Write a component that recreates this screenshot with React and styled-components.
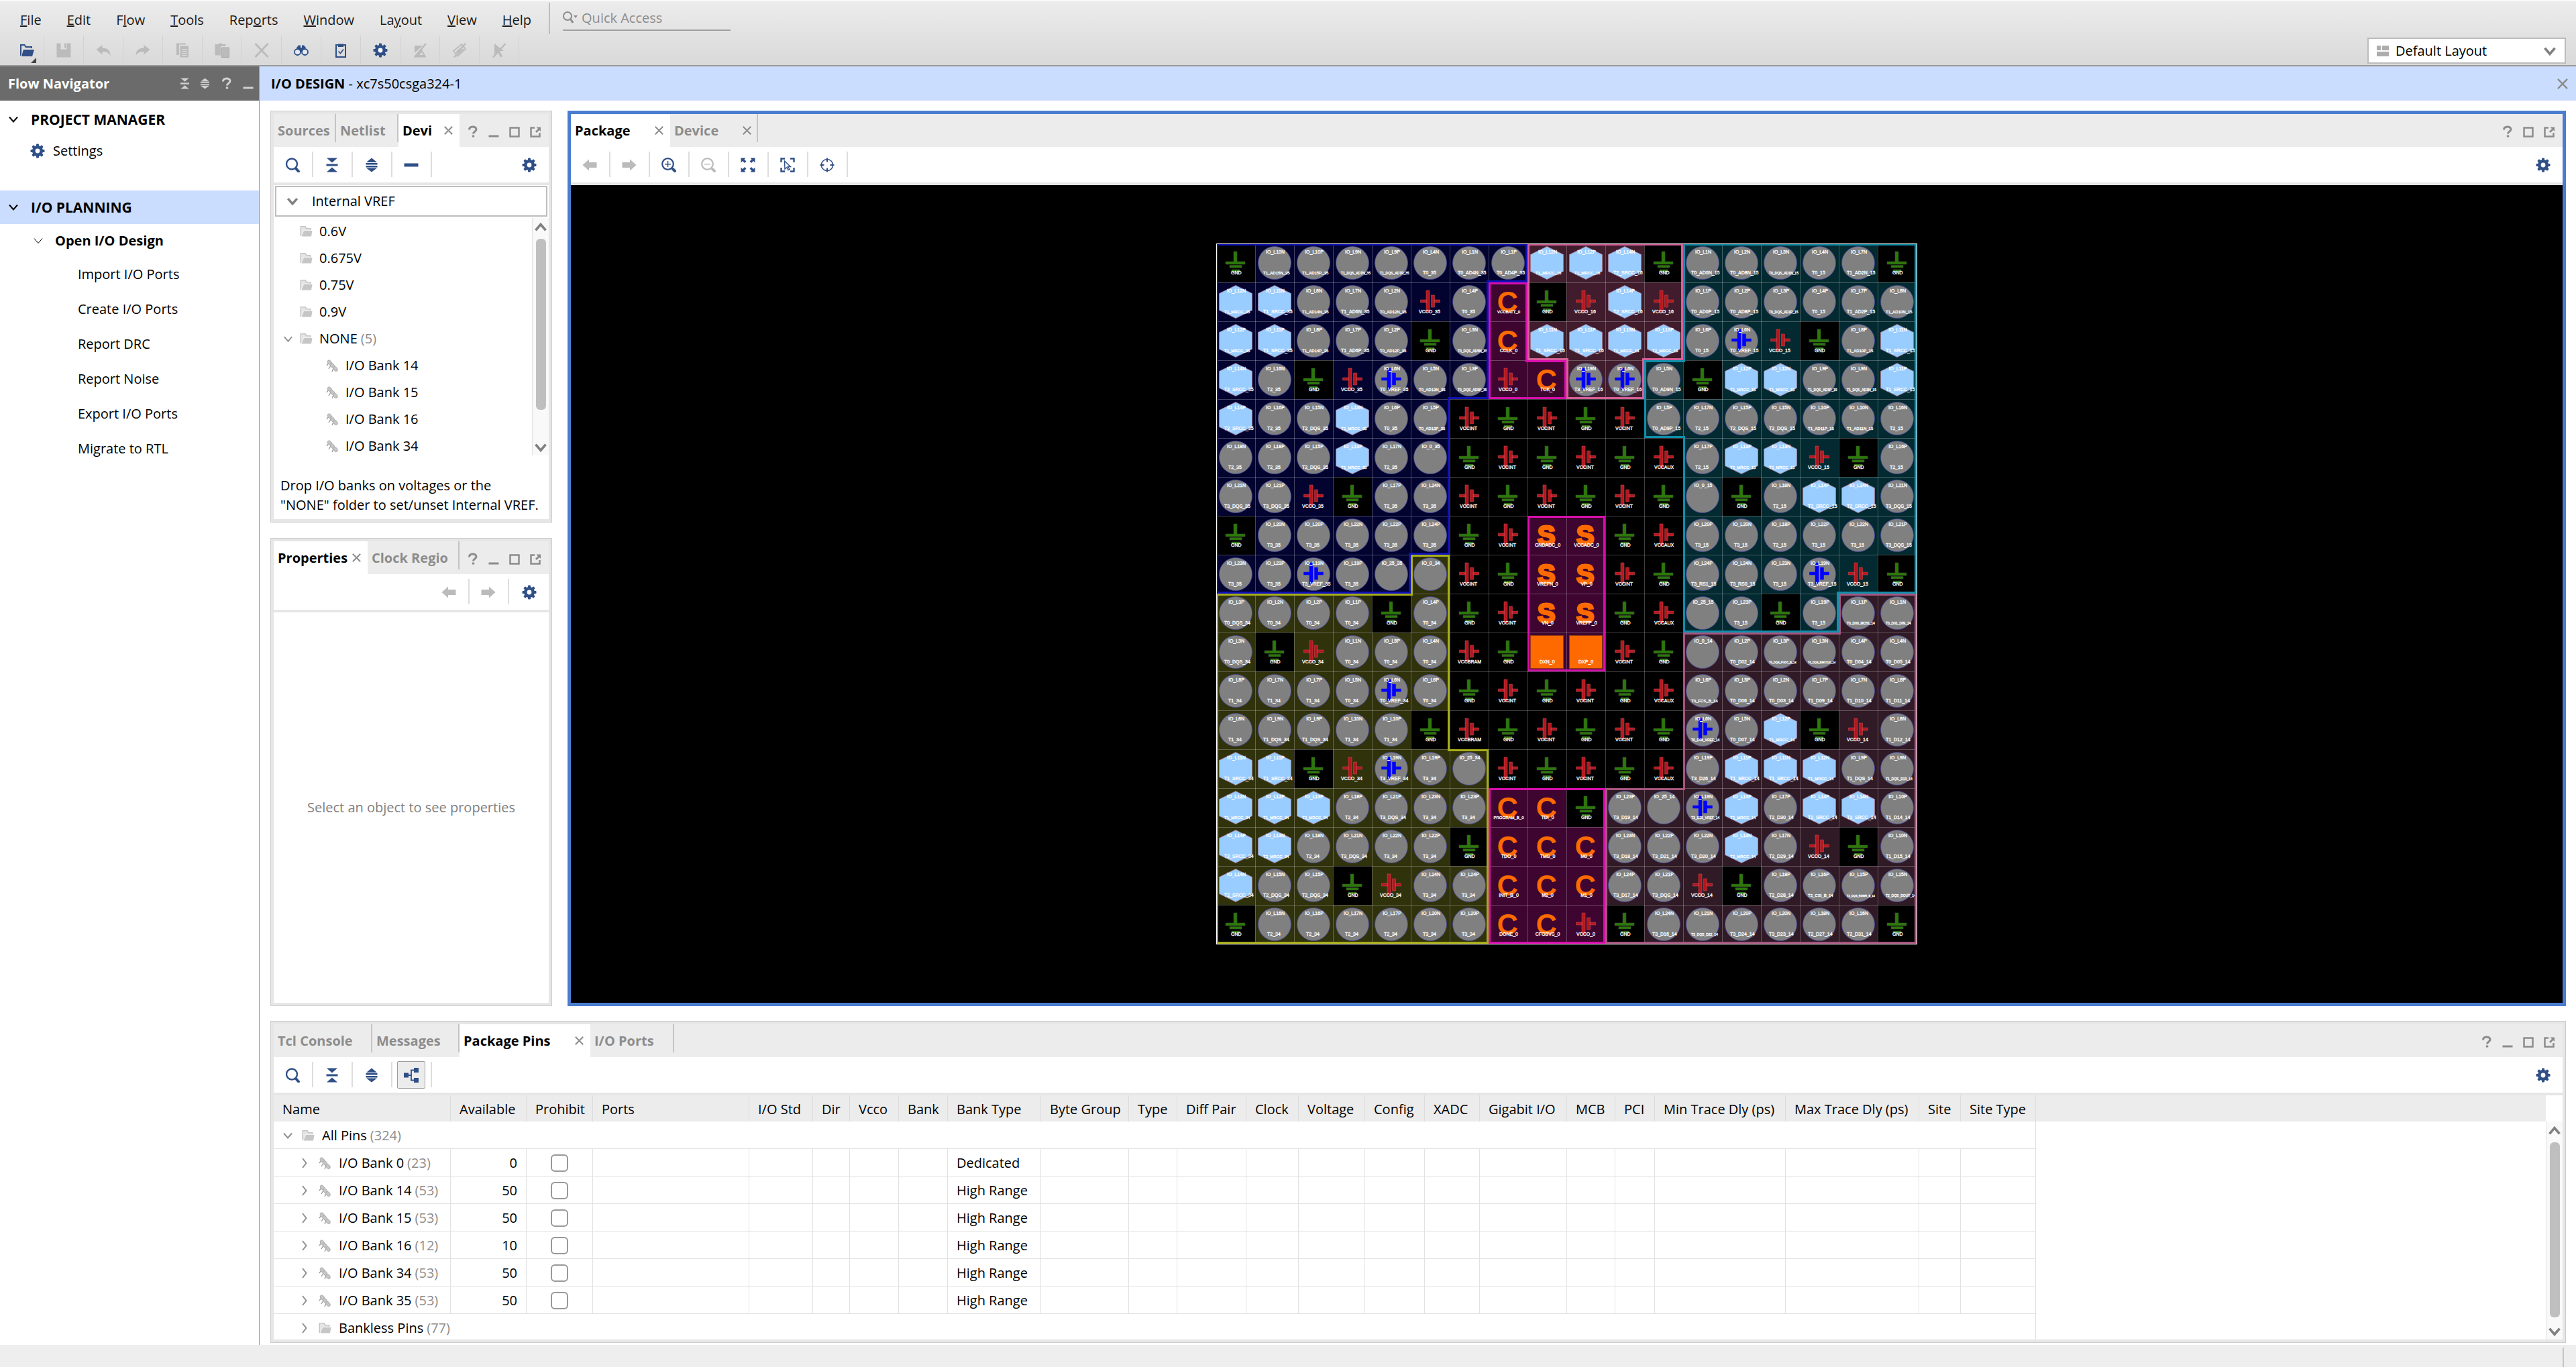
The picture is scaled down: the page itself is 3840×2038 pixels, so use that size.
import React, { useState } from "react";
import styled, { createGlobalStyle, css } from "styled-components";

const navy = "#2f4f86";
const mute = "#bbbbbb";
const line = "#e2e2e2";

const GlobalStyle = createGlobalStyle`
	* {
		box-sizing: border-box;
	}
	body {
		margin: 0;
		background: #ffffff;
		color: #000000;
		font-family: "Open Sans", "Noto Sans", sans-serif;
		font-size: 20px;
		line-height: 28px;
	}
	button, input, select {
		font: inherit;
		color: inherit;
		border: 0;
		padding: 0;
		margin: 0;
		background: none;
	}
	ul {
		list-style: none;
		margin: 0;
		padding: 0;
	}
	svg {
		display: block;
		flex: none;
	}
`;

/* ---------- page ---------- */

const Page = styled.div`
	display: flex;
	flex-direction: column;
	height: 100vh;
	overflow: hidden;
`;

const Header = styled.header`
	border-top: 2px solid #fafafa;
	border-bottom: 2px solid #999999;
	background: linear-gradient(#ececec, #d9d9d9);
`;

const MenuRow = styled.div`
	display: flex;
	height: 51px;
	padding-left: 11px;
`;

const MenuButton = styled.button`
	padding: 4px 19px 0 19px;
	color: #1a1a1a;
`;

const QuickAccess = styled.label`
	display: flex;
	align-items: center;
	width: 290px;
	margin: 2px 0 2px 7px;
	padding-left: 19px;
	border-left: 2px solid #bdbdbd;
`;

const QuickField = styled.span`
	display: flex;
	align-items: center;
	gap: 6px;
	width: 250px;
	height: 36px;
	border-bottom: 2px solid #a0a0a0;
	input {
		width: 200px;
		outline: none;
	}
	input::placeholder {
		color: #8c8c8c;
		opacity: 1;
	}
`;

const ToolRow = styled.div`
	display: flex;
	justify-content: space-between;
	height: 44px;
	padding: 0 15px 0 7px;
`;

const Tools = styled.div`
	display: flex;
`;

const HeadTool = styled.button`
	position: relative;
	display: flex;
	align-items: center;
	justify-content: center;
	width: 59px;
	border-right: 1px solid #d2d2d2;
	&:first-child {
		padding-left: 8px;
	}
`;

const Corner = styled.span`
	position: absolute;
	right: 11px;
	bottom: 3px;
	border-left: 8px solid transparent;
	border-bottom: 8px solid #444444;
`;

const LayoutPicker = styled.label`
	display: flex;
	align-items: center;
	width: 296px;
	height: 39px;
	margin-top: 3px;
	padding: 0 12px;
	background: #ffffff;
	border: 2px solid #bcbcbc;
	select {
		flex: 1;
		margin-left: 10px;
		appearance: none;
		outline: none;
	}
`;

const Body = styled.div`
	display: flex;
	flex: 1;
	min-height: 0;
`;

const Footer = styled.footer`
	height: 33px;
	padding: 4px 18px 0 0;
	background: #eeeeee;
	&::after {
		content: "";
		display: block;
		height: 29px;
		border-right: 2px solid #c4c4c4;
	}
`;

/* ---------- flow navigator ---------- */

const Nav = styled.nav`
	width: 387px;
	border-right: 1px solid #999999;
`;

const NavHead = styled.div`
	display: flex;
	align-items: center;
	gap: 13px;
	height: 51px;
	padding: 0 8px 0 12px;
	background: #6b6b6b;
	color: #ffffff;
	strong {
		flex: 1;
	}
`;

const NavSection = styled.button`
	display: flex;
	align-items: center;
	gap: 18px;
	width: 100%;
	height: 50px;
	padding-left: 12px;
	font-size: 21px;
	font-weight: 700;
	background: ${(props) => (props.$active ? "#cbddfe" : "none")};
`;

const NavGroup = styled.div`
	padding: ${(props) => (props.$top ? "3px 0 37px" : "0")};
`;

const NavItem = styled.button`
	display: flex;
	align-items: center;
	gap: 12px;
	width: 100%;
	height: ${(props) => (props.$level === 1 ? 44 : 52)}px;
	padding-left: ${(props) => [0, 45, 116][props.$level]}px;
`;

const NavDesign = styled(NavItem)`
	gap: 17px;
	height: 49px;
	padding-left: 49px;
	font-weight: 700;
`;

/* ---------- workspace ---------- */

const Main = styled.main`
	display: flex;
	flex-direction: column;
	flex: 1;
	min-width: 0;
`;

const TitleBar = styled.div`
	display: flex;
	align-items: center;
	justify-content: space-between;
	height: 51px;
	padding: 0 12px 0 17px;
	background: #cbddfe;
	h1 {
		margin: 0;
		font-size: 20px;
		font-weight: 400;
	}
`;

const Workspace = styled.div`
	display: flex;
	flex-direction: column;
	flex: 1;
	gap: 22px;
	min-height: 0;
	padding: 15px 15px 3px 16px;
`;

const UpperArea = styled.div`
	display: flex;
	flex: 1;
	gap: 23px;
	min-height: 0;
`;

const SideColumn = styled.div`
	display: flex;
	flex-direction: column;
	gap: 23px;
	width: 420px;
`;

const Panel = styled.section`
	display: flex;
	flex-direction: column;
	min-width: 0;
	min-height: 0;
	flex: ${(props) => props.$size || "1"};
	border: 1px solid #cccccc;
	box-shadow: inset 0 0 0 4px #e6e6e6;
	padding: 4px;
	${(props) =>
		props.$focus &&
		css`
			border: 5px solid #4a7dd0;
			box-shadow: none;
			padding: 0;
		`}
`;

const TabBar = styled.div`
	display: flex;
	height: 49px;
	background: #ececec;
`;

const Tab = styled.div`
	display: flex;
	align-items: center;
	justify-content: space-between;
	width: ${(props) => props.$width}px;
	padding: 0 10px 0 6px;
	color: #8c8c8c;
	font-weight: 700;
	white-space: nowrap;
	${(props) =>
		props.$line &&
		css`
			background: linear-gradient(#c4c4c4, #c4c4c4) right top / 2px 42px no-repeat;
		`}
	${(props) =>
		props.$active &&
		css`
			color: #000000;
			background: #ffffff;
		`}
	button {
		font-weight: 700;
	}
`;

const WindowButtons = styled.div`
	display: flex;
	align-items: center;
	gap: 9px;
	margin-left: auto;
	padding: 4px 9px 0 0;
	color: #8c8c8c;
`;

const ToolBar = styled.div`
	display: flex;
	height: 57px;
	padding: 0;
	background: #ffffff;
	border-bottom: 4px solid #e6e6e6;
`;

const Tool = styled.button`
	display: flex;
	align-items: center;
	justify-content: center;
	width: 59px;
	height: 53px;
	padding-right: 3px;
	background: linear-gradient(#dddddd, #dddddd) right 7px / 2px 38px no-repeat;
	${(props) =>
		props.$last &&
		css`
			padding-right: 0;
			background: none;
		`}
	${(props) => props.$right && "margin-left: auto;"}
`;

const Pressed = styled.span`
	display: flex;
	align-items: center;
	justify-content: center;
	width: 42px;
	height: 41px;
	border: 1px solid #9c9c9c;
	border-radius: 2px;
	background: #ececec;
`;

const VrefHead = styled.button`
	display: flex;
	align-items: center;
	gap: 20px;
	height: 46px;
	margin: 1px 2px 2px;
	padding-left: 15px;
	border: 2px solid #bdbdbd;
`;

const ScrollArea = styled.div`
	display: flex;
	flex: ${(props) => props.$flex || "none"};
	min-height: 0;
`;

const Tree = styled.ul`
	flex: 1;
	height: 354px;
	overflow: hidden;
`;

const TreeItem = styled.li`
	display: flex;
	align-items: center;
	gap: 10px;
	height: 40px;
	padding-left: ${(props) => props.$indent}px;
`;

const Count = styled.span`
	margin-left: 5px;
	color: #8c8c8c;
`;

const TreeLabel = styled.span`
	white-space: pre;
`;

const ScrollBar = styled.div`
	display: flex;
	flex-direction: column;
	align-items: center;
	justify-content: space-between;
	width: 25px;
	margin-top: ${(props) => props.$offset || 0}px;
	padding: 4px 0 2px;
	border-left: 1px solid #e2e2e2;
	background: #f9f9f9;
	color: #808080;
`;

const Thumb = styled.span`
	flex: 1;
	width: 15px;
	margin: 7px 0 ${(props) => props.$bottom}px;
	border-radius: 6px;
	background: #bfbfbf;
`;

const Hint = styled.p`
	margin: 0;
	padding: 30px 0 0 10px;
	line-height: 29px;
	white-space: nowrap;
`;

const Empty = styled.p`
	display: flex;
	align-items: center;
	justify-content: center;
	flex: 1;
	margin: 0;
	color: #808080;
`;

const Canvas = styled.div`
	display: flex;
	align-items: center;
	justify-content: center;
	flex: 1;
	min-height: 0;
	background: #000000;
`;

/* ---------- pins table ---------- */

const TableBox = styled.div`
	flex: 1;
	min-width: 0;
	overflow: hidden;
`;

const Table = styled.table`
	width: 100%;
	table-layout: fixed;
	border-collapse: separate;
	border-spacing: 0;
	white-space: nowrap;
	th {
		height: 39px;
		padding: 2px 0 0 13px;
		font-weight: 400;
		text-align: left;
		background: #ececec;
		border-right: 1px solid #dcdcdc;
	}
	th:last-child {
		border-right: 0;
	}
`;

const Cell = styled.td`
	height: 41px;
	padding: 2px ${(props) => (props.$align === "right" ? 13 : 0)}px 0
		${(props) => (props.$align ? 0 : 13)}px;
	text-align: ${(props) => props.$align || "left"};
	border-right: 1px solid ${line};
	border-bottom: 1px solid ${line};
	&:last-child {
		border: 0;
	}
`;

const NameCell = styled.div`
	display: flex;
	align-items: center;
	gap: 11px;
	padding-left: ${(props) => props.$indent}px;
	button {
		width: 18px;
	}
`;

const Check = styled.input`
	appearance: none;
	display: block;
	width: 26px;
	height: 26px;
	margin: 0 auto;
	border: 2px solid #999999;
	border-radius: 6px;
	background: #ffffff;
`;

/* ---------- icons ---------- */

const Svg = ({ w = 22, h = 22, color = "currentColor", children }) => (
	<svg width={w} height={h} viewBox={`0 0 ${w} ${h}`} fill={color} stroke="none" aria-hidden="true">
		{children}
	</svg>
);

const Gear = ({ color = navy }) => (
	<Svg color={color}>
		{[0, 45, 90, 135].map((a) => (
			<rect key={a} x="9" y="0.5" width="4" height="21" rx="1" transform={`rotate(${a} 11 11)`} />
		))}
		<circle cx="11" cy="11" r="8" />
		<circle cx="11" cy="11" r="3.4" fill="#ffffff" />
	</Svg>
);

const Search = ({ color = navy }) => (
	<Svg color={color}>
		<circle cx="10" cy="9.5" r="8" fill="none" stroke={color} strokeWidth="2.4" />
		<path d="M16 16l4 4.5" stroke={color} strokeWidth="4" strokeLinecap="round" />
	</Svg>
);

const Collapse = ({ color = navy, s = 22 }) => (
	<svg width={s} height={s} viewBox="0 0 22 22" fill={color} aria-hidden="true">
		<path d="M3 0.5h16L11 7.5zM2.5 9.5h17v3h-17zM11 14.5l8 7H3z" />
	</svg>
);

const Expand = ({ color = navy, s = 22 }) => (
	<svg width={s} height={s} viewBox="0 0 22 22" fill={color} aria-hidden="true">
		<path d="M11 0.5l8 6.500H3zM2.500 8h17v2.500h-17zM2.500 12h17v2.500h-17zM3 15.500h16l-8 6z" />
	</svg>
);

const Minus = () => (
	<Svg color={navy}>
		<path d="M0.500 8.500h21v5h-21z" />
	</Svg>
);

const Back = () => (
	<Svg color={mute}>
		<path d="M0.500 11l9.500-8.500v4.500h11.500v8h-11.500v4.500z" />
	</Svg>
);

const Forward = () => (
	<Svg color={mute}>
		<path d="M21.500 11l-9.500-8.500v4.500H0.500v8h11.500v4.500z" />
	</Svg>
);

const ZoomGlass = ({ plus, color }) => (
	<Svg color={color}>
		<circle cx="9.500" cy="9.500" r="8.300" fill="none" stroke={color} strokeWidth="2.200" />
		<path d="M17 17l3 3" stroke={color} strokeWidth="4" strokeLinecap="round" />
		<path d="M5 9h9v1.500H5z" />
		{plus && <path d="M8.800 5h1.500v9H8.800z" />}
	</Svg>
);

const Fit = () => (
	<Svg color={navy}>
		<path d="M0.500 0.500h7L5.500 2.500l3 3-2.500 2.500-3-3L0.500 7.500z" />
		<path d="M21.500 0.500v7L19 5l-3 3-2.500-2.500 3-3-2-2z" />
		<path d="M0.500 21.500v-7L3 17l3-3 2.500 2.500-3 3 2 2z" />
		<path d="M21.500 21.500h-7l2-2-3-3L16 14l3 3 2.500-2.500z" />
	</Svg>
);

const SelectArea = () => (
	<Svg color={navy}>
		<path
			d="M1.500 7V1.500H7M15 1.500h5.500V7M20.500 15v5.500H15M7 20.500H1.500V15"
			fill="none"
			stroke={navy}
			strokeWidth="2.400"
		/>
		<path
			d="M6.500 5l9 8.500h-4l2.500 4-2 1-2-4-3 2.500z"
			fill="#ffffff"
			stroke={navy}
			strokeWidth="1.400"
		/>
	</Svg>
);

const Target = () => (
	<Svg color={navy}>
		<circle cx="11" cy="11" r="8.600" fill="none" stroke={navy} strokeWidth="1.500" />
		<path d="M11 0.500v6M11 15.500v6M0.500 11h6M15.500 11h6" stroke={navy} strokeWidth="2" />
	</Svg>
);

const Hierarchy = () => (
	<Svg color={navy}>
		<path d="M0 7.500h7v7H0zM15 0h7v7h-7zM15 15h7v7h-7z" />
		<path d="M6 11h5M15 3.500h-4v15h4" fill="none" stroke={navy} strokeWidth="1.800" />
	</Svg>
);

const Cross = ({ s = 13, w = 2, color = "#8c8c8c" }) => (
	<svg width={s} height={s} viewBox="0 0 13 13" fill="none" stroke={color} strokeWidth={w} aria-hidden="true">
		<path d="M0.800 0.800l11.400 11.400M12.200 0.800L0.800 12.200" />
	</svg>
);

const Chevron = ({ dir = "down", w = 16, stroke = 2, color = "#000000" }) => (
	<svg
		width={w}
		height={w}
		viewBox="0 0 16 16"
		fill="none"
		stroke={color}
		strokeWidth={stroke}
		aria-hidden="true"
	>
		<path d={{ down: "M2 4.500l6 7 6-7", up: "M2 11.500l6-7 6 7", right: "M5 1l5.500 7L5 15" }[dir]} />
	</svg>
);

const Folder = () => (
	<Svg w={19} h={18} color="#c6c6c6">
		<path d="M0.500 1h8l2 3h6v3H15V5.500H9.500l-2-3H2V16H0.500z" />
		<path d="M2 2h6l2 3h6v2.500H5.500L2.500 15H2z" opacity="0.450" />
		<path d="M6 8h12.500l-1.500 8.500H2.500z" />
	</Svg>
);

const BankIcon = () => (
	<Svg w={19} h={19} color="#c6c6c6">
		<path d="M4 5l-3 4M7 9l-3 5M11 13l-2 5" stroke="#9a9a9a" strokeWidth="1.300" />
		{[
			[5.5, 4.5],
			[9.5, 9],
			[14, 14],
		].map(([x, y]) => (
			<ellipse
				key={x}
				cx={x}
				cy={y}
				rx="2.700"
				ry="4"
				transform={`rotate(-38 ${x} ${y})`}
				stroke="#a8a8a8"
				strokeWidth="0.800"
			/>
		))}
	</Svg>
);

const HelpMark = ({ color = "#8c8c8c" }) => (
	<Svg color={color}>
		<path
			d="M5.500 7.500c0-3 2.200-4.500 5.200-4.500s5.300 1.500 5.300 4c0 3-4.500 3-4.500 6.500"
			fill="none"
			stroke={color}
			strokeWidth="3"
		/>
		<path d="M9.800 15.500h3.400v3H9.800z" />
	</Svg>
);

const Minimize = ({ color = "#8c8c8c" }) => (
	<Svg color={color}>
		<path d="M3.500 15.500h15v3h-15z" />
	</Svg>
);

const Maximize = () => (
	<Svg>
		<path d="M4.500 4.500h13v13h-13z" fill="none" stroke="#8c8c8c" strokeWidth="2.500" />
	</Svg>
);

const PopOut = () => (
	<Svg color="#8c8c8c">
		<path d="M10 4.500H4.500v13h13V12" fill="none" stroke="#8c8c8c" strokeWidth="2.500" />
		<path d="M12.500 3.500h6.500V10l-2-2-4 4-2-2 4-4z" />
	</Svg>
);

const LayoutIcon = () => (
	<Svg w={18} h={16} color="#adadad">
		<path d="M0 0h6v7H0zM8 0h10v7H8zM0 9h18v7H0z" />
	</Svg>
);

const headIcons = {
	open: (
		<Svg color={navy}>
			<path d="M1 2h7l2 3h9v3h-2V7H9L7 4H3v12l-1 3H1z" />
			<path d="M6 10h16l-3 10H3z" />
		</Svg>
	),
	save: (
		<Svg color={mute}>
			<path d="M0.500 0.500h6v9h9v-9h6v21h-21zM12 0.500h2.500v7H12z" />
		</Svg>
	),
	undo: (
		<Svg color={mute}>
			<path d="M0.500 10l9-7v4.500c8 0 12 4 12 11.500-3-5-6-6-12-6v4.500z" />
		</Svg>
	),
	redo: (
		<Svg color={mute}>
			<path d="M21.500 10l-9-7v4.500c-8 0-12 4-12 11.500 3-5 6-6 12-6v4.500z" />
		</Svg>
	),
	copy: (
		<Svg color={mute}>
			<path d="M2 0.500h14v2H6V18H2z" />
			<path d="M7.500 4.500h12.500v17H7.500zM10 9v1h8V9zM10 12v1h8v-1zM10 15v1h8v-1zM10 18v1h8v-1z" fillRule="evenodd" />
		</Svg>
	),
	paste: (
		<Svg color={mute}>
			<path d="M0.500 2h5l1-1.500h4l1 1.500h5v3H9v13.500H0.500z" />
			<path d="M10.500 7H21.500v14.500H10.500z" stroke="#a8a8a8" />
		</Svg>
	),
	remove: (
		<Svg>
			<path d="M1.500 1l19 20M20.500 1l-19 20" stroke={mute} strokeWidth="2.800" />
		</Svg>
	),
	find: (
		<Svg color={navy}>
			<path d="M7 3.500h3v10h2v-10h3L18.500 8h-5l-2.500 1-2.500-1h-5z" />
			<path d="M5 7h12v5H5z" />
			<circle cx="5.500" cy="13.500" r="4.500" fill="#e4e8f0" stroke={navy} strokeWidth="1.800" />
			<circle cx="16.500" cy="13.500" r="4.500" fill="#e4e8f0" stroke={navy} strokeWidth="1.800" />
		</Svg>
	),
	report: (
		<Svg color={navy}>
			<path d="M4 3h14v18H4z" fill="none" stroke={navy} strokeWidth="2" />
			<path d="M7 1.500h8v4.500H7z" />
			<path d="M7.500 12.500l3 3 4.500-6" fill="none" stroke={navy} strokeWidth="1.600" />
		</Svg>
	),
	settings: <Gear />,
	mark: (
		<Svg color={mute}>
			<path d="M3 4h12L3 15zM1.500 21.500h19L14 10zM10 18h6l-2-4z" fillRule="evenodd" />
			<path d="M20 1L3 21" stroke={mute} strokeWidth="2.500" />
		</Svg>
	),
	highlight: (
		<Svg color={mute}>
			<path d="M2 12L14 2l6 7L8 20zM6 14l9-8M8 17l9-8" fill="none" stroke={mute} strokeWidth="1.700" />
			<path d="M20 0.500L3 21.500" stroke={mute} strokeWidth="2.200" />
		</Svg>
	),
	unselect: (
		<Svg color={mute}>
			<path d="M4 1l14 11h-6l4 8-3 1.500-4-8-5 4z" />
			<path d="M20.500 1L2 21.500" stroke={mute} strokeWidth="2.500" />
		</Svg>
	),
};

/* ---------- package drawing ---------- */

const CELL = 58;

const banks = {
	a: { id: "35", fill: "#030330", edge: "#0f12b8" },
	b: { id: "16", fill: "#401c2c", edge: "#d8609a" },
	c: { id: "15", fill: "#032a30", edge: "#108fac" },
	d: { id: "34", fill: "#30320c", edge: "#a8ae18" },
	e: { id: "14", fill: "#301a26", edge: "#a5567f" },
	f: { id: "0", fill: "#3d0530", edge: "#d90fae" },
	".": { id: "", fill: "#000000", edge: null },
};

const bankMap = [
	"aaaaaaaabbbbcccccc",
	"aaaaaaafbbbbcccccc",
	"aaaaaaafbbbbcccccc",
	"aaaaaaaffbbccccccc",
	"aaaaaa.....ccccccc",
	"aaaaaa......cccccc",
	"aaaaaa......cccccc",
	"aaaaaa..ff..cccccc",
	"aaaaad..ff..cccccc",
	"dddddd..ff..ccccee",
	"dddddd..ff..eeeeee",
	"dddddd......eeeeee",
	"dddddd......eeeeee",
	"ddddddd.....eeeeee",
	"dddddddfffeeeeeeee",
	"dddddddfffeeeeeeee",
	"dddddddfffeeeeeeee",
	"dddddddfffeeeeeeee",
];

// G ground, O vcco, I vccint, A vccaux, B vccbram, h hexagon, v vref, C/S/Q dedicated
const pinRows = [
	"G L10N/T1_AD15N L10P/T1_AD15P L9N/T1_DQS_AD7N L9P/T1_DQS_AD7P L4N/T0 L1N/T0_AD4N L1P/T0_AD4P hL12N/T1_MRCC hL12P/T1_MRCC hL14N/T2_SRCC G L1N/T0_AD0N L2N/T0_AD8N L3N/T0_DQS_AD1N L4N/T0 L7N/T1_AD2N G",
	"hL12N/T1_MRCC hL11N/T1_SRCC L8N/T1_AD14N L7N/T1_AD6N L2N/T0_AD12N O L4P/T0 C:VCCBATT G O hL14P/T2_SRCC O L1P/T0_AD0P L2P/T0_AD8P L3P/T0_DQS_AD1P L4P/T0 L7P/T1_AD2P L8N/T1_AD10N",
	"hL12P/T1_MRCC hL11P/T1_SRCC L8P/T1_AD14P L7P/T1_AD6P L2P/T0_AD12P G L3N/T0_DQS_AD5N C:CCLK hL11N/T1_SRCC hL11P/T1_SRCC hL13N/T2_MRCC hL13P/T2_MRCC L6P/T0 vL6N/T0_VREF O G L8P/T1_AD10P hL11N/T1_SRCC",
	"hL14N/T2_SRCC L16N/T2 G O vL6N/T0_VREF L5N/T0_AD13N L3P/T0_DQS_AD5P O C:TCK vL19N/T3_VREF vL6N/T0_VREF L5N/T0_AD9N G hL12P/T1_MRCC hL12N/T1_MRCC L9P/T1_DQS_AD3P L9N/T1_DQS_AD3N hL11P/T1_SRCC",
	"hL14P/T2_SRCC L16P/T2 L15N/T2_DQS hL13N/T2_MRCC L6P/T0 L5P/T0_AD13P I G I G I L5P/T0_AD9P L17N/T2 L15P/T2_DQS L15N/T2_DQS L10P/T1_AD11P L10N/T1_AD11N L16N/T2",
	"L18N/T2 L18P/T2 L15P/T2_DQS hL13P/T2_MRCC L17N/T2 0 G I G I G A L17P/T2 hL13P/T2_MRCC hL13N/T2_MRCC O G L16P/T2",
	"L21N/T3_DQS L21P/T3_DQS O G L17P/T2 L24N/T3 I G I G I G 0 G L18N/T2 hL14P/T2_SRCC hL14N/T2_SRCC L21N/T3_DQS",
	"G L20N/T3 L20P/T3 L22N/T3 L22P/T3 L24P/T3 G I S:GNDADC S:VCCADC G A L20P/T3 L20N/T3 L18P/T2 L22P/T3 L22N/T3 L21P/T3_DQS",
	"L23N/T3 L23P/T3 vL19N/T3_VREF L19P/T3 25 0 I G S:VREFN S:VP I G L24P/T3_RS1 L24N/T3_RS0 L23N/T3 vL19N/T3_VREF O G",
	"L3P/T0_DQS L2N/T0 L2P/T0 L1P/T0 G L4P/T0 G I S:VN S:VREFP G A 25 L23P/T3 G L19P/T3 L1P/T0_D00_MOSI L1N/T0_D01_DIN",
	"L3N/T0_DQS G O L1N/T0 L5P/T0 L4N/T0 B G Q:DXN Q:DXP I G 0 L2P/T0_D02 L3P/T0_DQS_PUDC_B L3N/T0_DQS_EMCCLK L4P/T0_D04 L4N/T0_D05",
	"L8P/T1 L7N/T1 L7P/T1 L5N/T0 vL6N/T0_VREF L6P/T0 G I G I G A L6P/T0_FCS_B L5P/T0_D06 L2N/T0_D03 L7P/T1_D09 L7N/T1_D10 L8P/T1_D11",
	"L8N/T1 L9N/T1_DQS L9P/T1_DQS L10N/T1 L10P/T1 G B G I G I G vL6N/T0_D08_VREF L5N/T0_D07 hL12P/T1_MRCC G O L8N/T1_D12",
	"hL11N/T1_SRCC hL11P/T1_SRCC G O vL19N/T3_VREF L19P/T3 25 I G I G A L19P/T3_D26 hL11P/T1_SRCC hL11N/T1_SRCC hL12N/T1_MRCC L9P/T1_DQS L9N/T1_DQS_D13",
	"hL12N/T1_MRCC hL12P/T1_MRCC hL13P/T2_MRCC L18P/T2 L21P/T3_DQS L23N/T3 L23P/T3 C:PROGRAM_B C:TDI G L23P/T3_D19 25 vL19N/T3_D25_VREF hL13P/T2_MRCC L17P/T2_D30 hL14P/T2_SRCC hL14N/T2_SRCC L10P/T1_D14",
	"hL14P/T2_SRCC hL13N/T2_MRCC L18N/T2 L21N/T3_DQS L22N/T3 L22P/T3 G C:TDO C:TMS C:M0 L23N/T3_D18 L22P/T3_D21 L22N/T3_D20 hL13N/T2_MRCC L17N/T2_D29 O G L10N/T1_D15",
	"hL14N/T2_SRCC L15N/T2_DQS L15P/T2_DQS G O L24N/T3 L24P/T3 C:INIT_B C:M2 C:M1 L24P/T3_D17 L21P/T3_DQS O G L18P/T2_D28 L16P/T2_CSI_B L15P/T2_DQS_RDWR_B L15N/T2_DQS_DOUT",
	"G L16N/T2 L16P/T2 L17N/T2 L17P/T2 L20N/T3 L20P/T3 C:DONE C:CFGBVS O G L24N/T3_D16 L21N/T3_DQS_D22 L20P/T3_D24 L20N/T3_D23 L18N/T2_D27 L16N/T2_D31 G",
];

const PinText = styled.text`
	fill: #ffffff;
	stroke: #ffffff;
	stroke-width: 0.3px;
	font-family: "Liberation Sans", Arial, sans-serif;
	font-size: ${(props) => props.$size || 7}px;
`;

const Letter = styled.text`
	fill: #ff6a00;
	stroke: #ff6a00;
	stroke-width: ${(props) => (props.$heavy ? 3 : 2)}px;
	font-family: "Liberation Sans", Arial, sans-serif;
	font-size: ${(props) => (props.$heavy ? 40 : 41)}px;
	font-weight: ${(props) => (props.$heavy ? 700 : 400)};
	text-anchor: middle;
`;

const BoardSvg = styled.svg`
	width: 1045px;
	max-width: 100%;
	max-height: 100%;
`;

const lowerSize = (text) => {
	if (text.length > 14) return 4;
	if (text.length > 12) return 5;
	if (text.length > 10 || text.includes("MRCC")) return 6;
	return 7;
};

const Lower = ({ text }) => (
	<PinText x={text.length < 6 ? 18 : 12} y="46" $size={lowerSize(text)}>
		{text}
	</PinText>
);

const Cap = ({ color, edge }) => (
	<path
		d="M23 12h5v32h-5zM30.500 19h5v18h-5zM14.500 26h9v4h-9zM35 26h8.500v4H35z"
		fill={color}
		stroke={edge}
		strokeWidth="0.500"
	/>
);

const Pin = ({ token, bank }) => {
	const kind = token[0];
	if (kind === "G") {
		return (
			<>
				<rect width={CELL} height={CELL} fill="#000000" />
				<path
					d="M26 12h5v15h12v4H14v-4h12zM20 32.500h18v3.500H20zM23 39h12v3.500H23z"
					fill="#2b7a08"
					stroke="#3b4a34"
					strokeWidth="0.600"
				/>
				<PinText x="22" y="46">GND</PinText>
			</>
		);
	}
	if ("OIAB".includes(kind)) {
		const name = { O: `VCCO_${bank.id}`, I: "VCCINT", A: "VCCAUX", B: "VCCBRAM" }[kind];
		return (
			<>
				<Cap color="#b5171e" edge="#c4505a" />
				<PinText x={name.length > 6 ? 12 : 15} y="46">{name}</PinText>
			</>
		);
	}
	if (kind === "Q") {
		return (
			<>
				<rect x="4.500" y="4.500" width="49" height="49" fill="#ff6a00" stroke="#9a3d10" />
				<PinText x="18" y="46">{token.slice(2)}_0</PinText>
			</>
		);
	}
	if (token[1] === ":") {
		return (
			<>
				<Letter x="28" y="43" $heavy={kind === "S"}>{kind}</Letter>
				<PinText x="30" y="46" textAnchor="middle" $size={token.length > 8 ? 6 : 7}>
					{token.slice(2)}_0
				</PinText>
			</>
		);
	}
	const [name, func] = token.replace(/^[hv]/, "").split("/");
	return (
		<>
			{kind === "h" ? (
				<path
					d="M29 4.500l24.500 12v25L29 53.500l-24.500-12v-25z"
					fill="#99ccff"
					stroke="#a87890"
					strokeWidth="0.800"
				/>
			) : (
				<circle cx="29" cy="29" r="24.500" fill="#808080" stroke="#4646a0" strokeWidth="0.800" />
			)}
			{kind === "v" && <Cap color="#0000ff" edge="#0000ff" />}
			<PinText x="30" y="15" textAnchor="middle">
				{func ? `IO_${name}` : `IO_${name}_${bank.id}`}
			</PinText>
			{func && <Lower text={`${func}_${bank.id}`} />}
		</>
	);
};

const edgeRects = (r, c) => {
	const at = (dr, dc) => (bankMap[r + dr] || "")[c + dc] === bankMap[r][c];
	const w = 3;
	const far = CELL - w;
	const out = [];
	if (!at(-1, 0)) out.push([0, 0, CELL, w]);
	if (!at(1, 0)) out.push([0, far, CELL, w]);
	if (!at(0, -1)) out.push([0, 0, w, CELL]);
	if (!at(0, 1)) out.push([far, 0, w, CELL]);
	if (at(-1, 0) && at(0, -1) && !at(-1, -1)) out.push([0, 0, w, w]);
	if (at(-1, 0) && at(0, 1) && !at(-1, 1)) out.push([far, 0, w, w]);
	if (at(1, 0) && at(0, -1) && !at(1, -1)) out.push([0, far, w, w]);
	if (at(1, 0) && at(0, 1) && !at(1, 1)) out.push([far, far, w, w]);
	return out;
};

const PackageView = () => {
	const cells = pinRows.flatMap((row, r) =>
		row.split(" ").map((token, c) => ({ token, r, c, bank: banks[bankMap[r][c]] }))
	);
	const move = (d) => `translate(${d.c * CELL} ${d.r * CELL})`;
	const lines = Array.from({ length: 17 }, (_, i) => (i + 1) * CELL);
	return (
		<BoardSvg viewBox="0 0 1045 1045" role="img" aria-label="Package pins">
			{cells.map((d) => (
				<rect key={`${d.r}-${d.c}`} transform={move(d)} width={CELL} height={CELL} fill={d.bank.fill} />
			))}
			{cells.map((d) => (
				<g key={`${d.r}-${d.c}`} transform={move(d)}>
					<Pin token={d.token} bank={d.bank} />
				</g>
			))}
			{lines.map((p) => (
				<path
					key={p}
					d={`M${p + 0.5} 0v1044M0 ${p + 0.5}h1044`}
					stroke="#ffffff"
					strokeOpacity="0.25"
				/>
			))}
			{cells
				.filter((d) => d.bank.edge)
				.map((d) => (
					<g key={`${d.r}-${d.c}`} transform={move(d)} fill={d.bank.edge}>
						{edgeRects(d.r, d.c).map(([x, y, w, h], i) => (
							<rect key={i} x={x} y={y} width={w} height={h} />
						))}
					</g>
				))}
			<rect x="0.5" y="0.5" width="1044" height="1044" fill="none" stroke="#ffffff" />
		</BoardSvg>
	);
};

/* ---------- data ---------- */

const menus = [
	["", "F", "ile"],
	["", "E", "dit"],
	["F", "l", "ow"],
	["", "T", "ools"],
	["Rep", "o", "rts"],
	["", "W", "indow"],
	["La", "y", "out"],
	["", "V", "iew"],
	["", "H", "elp"],
];

const planning = [
	"Import I/O Ports",
	"Create I/O Ports",
	"Report DRC",
	"Report Noise",
	"Export I/O Ports",
	"Migrate to RTL",
];

const columns = [
	["Name", 264],
	["Available", 113],
	["Prohibit", 99],
	["Ports", 233],
	["I/O Std", 95],
	["Dir", 55],
	["Vcco", 73],
	["Bank", 73],
	["Bank Type", 139],
	["Byte Group", 131],
	["Type", 72],
	["Diff Pair", 103],
	["Clock", 78],
	["Voltage", 99],
	["Config", 89],
	["XADC", 82],
	["Gigabit I/O", 130],
	["MCB", 72],
	["PCI", 59],
	["Min Trace Dly (ps)", 195],
	["Max Trace Dly (ps)", 199],
	["Site", 62],
	["Site Type", 112],
];

const pinGroups = [
	["I/O Bank 0", 23, 0, "Dedicated"],
	["I/O Bank 14", 53, 50, "High Range"],
	["I/O Bank 15", 53, 50, "High Range"],
	["I/O Bank 16", 12, 10, "High Range"],
	["I/O Bank 34", 53, 50, "High Range"],
	["I/O Bank 35", 53, 50, "High Range"],
];

/* ---------- parts ---------- */

const TabItem = ({ label, width, active, line, close }) => (
	<Tab $width={width} $active={active} $line={line}>
		<button>{label}</button>
		{close && (
			<button aria-label={`Close ${label}`}>
				<Cross />
			</button>
		)}
	</Tab>
);

const Controls = ({ minimize = true }) => (
	<WindowButtons>
		<button aria-label="Help"><HelpMark /></button>
		{minimize && <button aria-label="Minimize"><Minimize /></button>}
		<button aria-label="Maximize"><Maximize /></button>
		<button aria-label="Float"><PopOut /></button>
	</WindowButtons>
);

const SettingsTool = ({ right = true }) => (
	<Tool $last $right={right} aria-label="Settings">
		<Gear />
	</Tool>
);

const Scroller = ({ offset, bottom }) => (
	<ScrollBar $offset={offset}>
		<Chevron dir="up" w={20} stroke={3} color="#808080" />
		<Thumb $bottom={bottom} />
		<Chevron dir="down" w={20} stroke={3} color="#808080" />
	</ScrollBar>
);

const TopHeader = () => (
	<Header>
		<MenuRow>
			{menus.map(([a, key, b]) => (
				<MenuButton key={a + key + b}>
					{a}
					<u>{key}</u>
					{b}
				</MenuButton>
			))}
			<QuickAccess>
				<QuickField>
					<Svg color="#8c8c8c">
						<circle cx="7" cy="8" r="6" fill="none" stroke="#8c8c8c" strokeWidth="2" />
						<path d="M12 13l3 5" stroke="#8c8c8c" strokeWidth="3" />
						<path d="M16 7h6l-3 4z" />
					</Svg>
					<input placeholder="Quick Access" aria-label="Quick Access" />
				</QuickField>
			</QuickAccess>
		</MenuRow>
		<ToolRow>
			<Tools>
				{Object.keys(headIcons).map((name) => (
					<HeadTool key={name} aria-label={name}>
						{headIcons[name]}
						{name === "open" && <Corner />}
					</HeadTool>
				))}
			</Tools>
			<LayoutPicker>
				<LayoutIcon />
				<select aria-label="Layout" defaultValue="Default Layout">
					<option>Default Layout</option>
				</select>
				<Chevron w={20} stroke={3} color="#808080" />
			</LayoutPicker>
		</ToolRow>
	</Header>
);

const FlowNavigator = () => (
	<Nav>
		<NavHead>
			<strong>Flow Navigator</strong>
			<Collapse color="#d0d0d0" s={17} />
			<Expand color="#d0d0d0" s={17} />
			<HelpMark color="#d0d0d0" />
			<Svg w={16} color="#d0d0d0">
				<path d="M0.500 15.500h15v3h-15z" />
			</Svg>
		</NavHead>
		<NavGroup $top>
			<NavSection>
				<Chevron />
				PROJECT MANAGER
			</NavSection>
			<NavItem $level={1}>
				<Gear />
				Settings
			</NavItem>
		</NavGroup>
		<NavGroup>
			<NavSection $active>
				<Chevron />
				I/O PLANNING
			</NavSection>
			<NavDesign>
				<Chevron stroke={1} />
				Open I/O Design
			</NavDesign>
			{planning.map((name) => (
				<NavItem key={name} $level={2}>
					{name}
				</NavItem>
			))}
		</NavGroup>
	</Nav>
);

const DevicePanel = () => (
	<Panel $size="0 0 614px">
		<TabBar>
			<TabItem label="Sources" width={93} line />
			<TabItem label="Netlist" width={93} line />
			<TabItem label="Devi" width={91} active close />
			<Controls />
		</TabBar>
		<ToolBar>
			<Tool aria-label="Search"><Search /></Tool>
			<Tool aria-label="Collapse all"><Collapse /></Tool>
			<Tool aria-label="Expand all"><Expand /></Tool>
			<Tool aria-label="Remove"><Minus /></Tool>
			<SettingsTool />
		</ToolBar>
		<VrefHead>
			<Chevron w={18} stroke={3} color="#808080" />
			Internal VREF
		</VrefHead>
		<ScrollArea>
			<Tree>
				{["0.6V", "0.675V", "0.75V", "0.9V"].map((name) => (
					<TreeItem key={name} $indent={39}>
						<Folder />
						{name}
					</TreeItem>
				))}
				<TreeItem $indent={14}>
					<Chevron w={15} stroke={2} color="#909090" />
					<Folder />
					<TreeLabel>
						NONE<Count>(5)</Count>
					</TreeLabel>
				</TreeItem>
				{["14", "15", "16", "34"].map((id) => (
					<TreeItem key={id} $indent={78}>
						<BankIcon />I/O Bank {id}
					</TreeItem>
				))}
			</Tree>
			<Scroller bottom={46} />
		</ScrollArea>
		<Hint>
			Drop I/O banks on voltages or the
			<br />
			"NONE" folder to set/unset Internal VREF.
		</Hint>
	</Panel>
);

const PropertiesPanel = () => (
	<Panel>
		<TabBar>
			<TabItem label="Properties" width={140} active close />
			<TabItem label="Clock Regio" width={137} line />
			<Controls />
		</TabBar>
		<ToolBar>
			<Tool $right aria-label="Back"><Back /></Tool>
			<Tool aria-label="Forward"><Forward /></Tool>
			<SettingsTool right={false} />
		</ToolBar>
		<Empty>Select an object to see properties</Empty>
	</Panel>
);

const PackagePanel = () => (
	<Panel $focus>
		<TabBar>
			<TabItem label="Package" width={148} active close />
			<TabItem label="Device" width={131} line close />
			<Controls minimize={false} />
		</TabBar>
		<ToolBar>
			<Tool aria-label="Back"><Back /></Tool>
			<Tool aria-label="Forward"><Forward /></Tool>
			<Tool aria-label="Zoom in"><ZoomGlass plus color={navy} /></Tool>
			<Tool aria-label="Zoom out"><ZoomGlass color={mute} /></Tool>
			<Tool aria-label="Zoom fit"><Fit /></Tool>
			<Tool aria-label="Select area"><SelectArea /></Tool>
			<Tool aria-label="Autofit selection"><Target /></Tool>
			<SettingsTool />
		</ToolBar>
		<Canvas>
			<PackageView />
		</Canvas>
	</Panel>
);

const GroupRow = ({ indent, open, label, count }) => (
	<tr>
		<Cell colSpan={columns.length}>
			<NameCell $indent={indent}>
				<button aria-label={`Toggle ${label}`}>
					<Chevron dir={open ? "down" : "right"} w={16} color="#909090" />
				</button>
				<Folder />
				<TreeLabel>
					{label}
					<Count>({count})</Count>
				</TreeLabel>
			</NameCell>
		</Cell>
		<Cell />
	</tr>
);

const PinsPanel = () => {
	const [prohibited, setProhibited] = useState({});
	const toggle = (name) => {
		setProhibited({ ...prohibited, [name]: !prohibited[name] });
	};
	return (
		<Panel $size="0 0 480px">
			<TabBar>
				<TabItem label="Tcl Console" width={147} line />
				<TabItem label="Messages" width={130} line />
				<TabItem label="Package Pins" width={195} active close />
				<TabItem label="I/O Ports" width={125} line />
				<Controls />
			</TabBar>
			<ToolBar>
				<Tool aria-label="Search"><Search /></Tool>
				<Tool aria-label="Collapse all"><Collapse /></Tool>
				<Tool aria-label="Expand all"><Expand /></Tool>
				<Tool aria-label="Group by bank">
					<Pressed><Hierarchy /></Pressed>
				</Tool>
				<SettingsTool />
			</ToolBar>
			<ScrollArea $flex="1">
				<TableBox>
					<Table>
						<colgroup>
							{columns.map(([name, width]) => (
								<col key={name} style={{ width }} />
							))}
							<col />
						</colgroup>
						<thead>
							<tr>
								{columns.map(([name]) => (
									<th key={name}>{name}</th>
								))}
								<th />
							</tr>
						</thead>
						<tbody>
							<GroupRow indent={-4} open label="All Pins" count={324} />
							{pinGroups.map(([name, count, available, type]) => (
								<tr key={name}>
									<Cell>
										<NameCell $indent={25}>
											<button aria-label={`Expand ${name}`}>
												<Chevron dir="right" w={16} color="#909090" />
											</button>
											<BankIcon />
											<TreeLabel>
												{name}
												<Count>({count})</Count>
											</TreeLabel>
										</NameCell>
									</Cell>
									<Cell $align="right">{available}</Cell>
									<Cell $align="center">
										<Check
											type="checkbox"
											aria-label={`Prohibit ${name}`}
											checked={!!prohibited[name]}
											onChange={() => toggle(name)}
										/>
									</Cell>
									{columns.slice(3).map(([column]) => (
										<Cell key={column}>{column === "Bank Type" && type}</Cell>
									))}
									<Cell />
								</tr>
							))}
							<GroupRow indent={25} label="Bankless Pins" count={77} />
						</tbody>
					</Table>
				</TableBox>
				<Scroller offset={39} bottom={11} />
			</ScrollArea>
		</Panel>
	);
};

const App = () => (
	<Page>
		<GlobalStyle />
		<TopHeader />
		<Body>
			<FlowNavigator />
			<Main>
				<TitleBar>
					<h1>
						<strong>I/O DESIGN</strong> - xc7s50csga324-1
					</h1>
					<button aria-label="Close design">
						<Cross s={16} />
					</button>
				</TitleBar>
				<Workspace>
					<UpperArea>
						<SideColumn>
							<DevicePanel />
							<PropertiesPanel />
						</SideColumn>
						<PackagePanel />
					</UpperArea>
					<PinsPanel />
				</Workspace>
			</Main>
		</Body>
		<Footer />
	</Page>
);

export default App;
